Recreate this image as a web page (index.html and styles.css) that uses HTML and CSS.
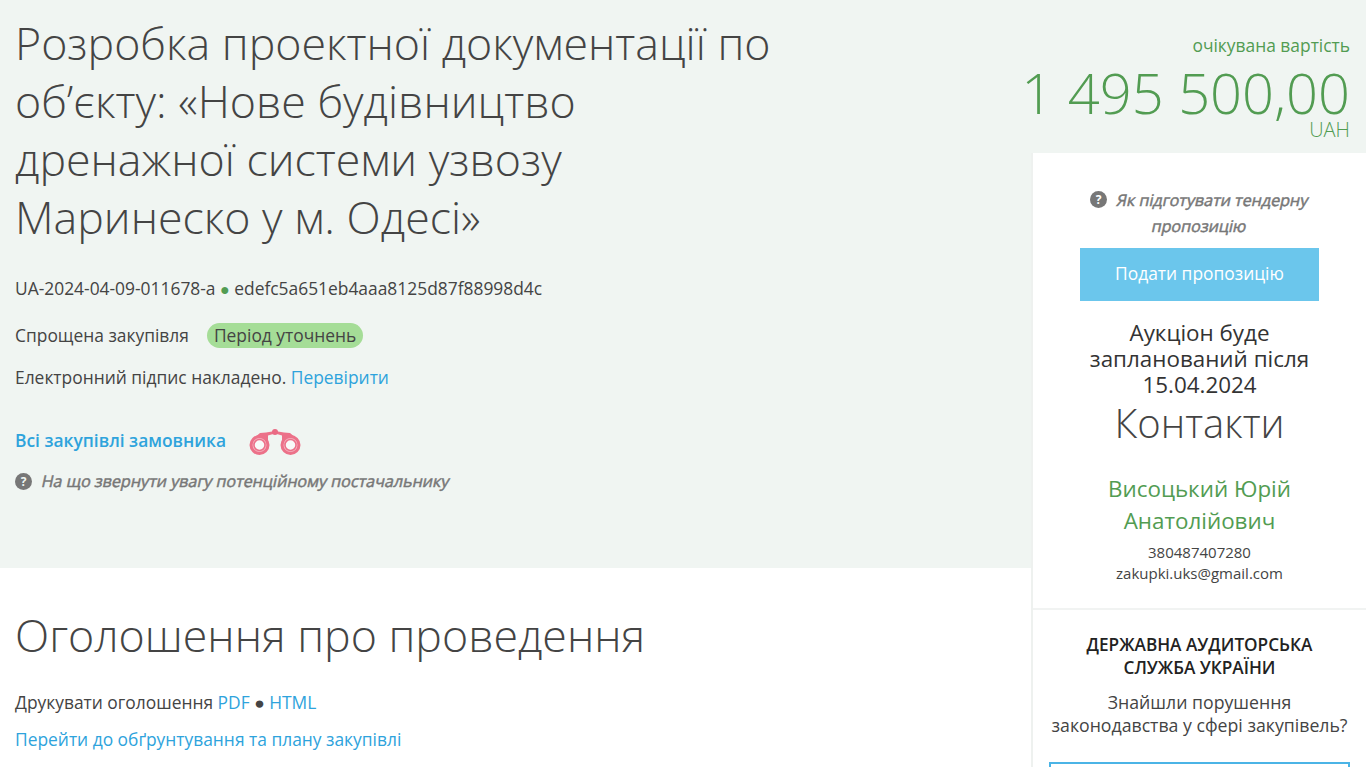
FILE: index.html
```html
<!DOCTYPE html>
<html lang="uk">
<head>
<meta charset="utf-8">
<title>Закупівля</title>
<link rel="stylesheet" href="styles.css">
</head>
<body>
<div class="page">
  <main class="main">
    <section class="hero">
      <h1 class="title">Розробка проектної документації по об’єкту: «Нове будівництво дренажної системи узвозу Маринеско у м. Одесі»</h1>
      <p class="ids">UA-2024-04-09-011678-a <span class="dot">●</span> edefc5a651eb4aaa8125d87f88998d4c</p>
      <p class="status-row"><span>Спрощена закупівля</span><span class="badge">Період уточнень</span></p>
      <p class="sign">Електронний підпис накладено. <a href="#">Перевірити</a></p>
      <p class="buyer">
        <a href="#" class="buyer-link">Всі закупівлі замовника</a>
        <svg class="binoculars" width="52" height="28" viewBox="0 0 52 28" aria-hidden="true">
          <path d="M26 3 L17 4.500 L11 5 L5 10 L2 15 L19 13 L19 7.500 L26 5.500 L33 7.500 L33 13 L50 15 L47 10 L41 5 L35 4.500 Z" fill="#ec7189"/>
          <circle cx="26" cy="4" r="3" fill="#ea6a84"/>
          <circle cx="10.500" cy="17" r="8.500" fill="#f4b4c1" stroke="#ec7189" stroke-width="3"/>
          <circle cx="41.500" cy="17" r="8.500" fill="#f4b4c1" stroke="#ec7189" stroke-width="3"/>
          <circle cx="10.500" cy="17" r="5.500" fill="#f8f9f8" stroke="#ec7189" stroke-width="1.500"/>
          <circle cx="41.500" cy="17" r="5.500" fill="#f8f9f8" stroke="#ec7189" stroke-width="1.500"/>
        </svg>
      </p>
      <p class="hint"><span class="q">?</span><span class="slant">На що звернути увагу потенційному постачальнику</span></p>
    </section>
    <section class="notice">
      <h2 class="notice-title">Оголошення про проведення</h2>
      <p class="print">Друкувати оголошення <a href="#">PDF</a> ● <a href="#">HTML</a></p>
      <p class="plan"><a href="#">Перейти до обґрунтування та плану закупівлі</a></p>
    </section>
  </main>
  <aside class="side">
    <div class="price">
      <div class="price-label">очікувана вартість</div>
      <div class="price-value">1 495 500,00</div>
      <div class="price-cur">UAH</div>
    </div>
    <div class="card">
      <div class="card-top">
        <p class="prep"><span class="prep-line"><span class="q q-side">?</span><span class="slant">Як підготувати тендерну</span></span><span class="prep-line"><span class="slant">пропозицію</span></span></p>
        <a href="#" class="submit">Подати пропозицію</a>
        <p class="auction">Аукціон буде запланований після 15.04.2024</p>
        <h3 class="contacts">Контакти</h3>
        <p class="person">Висоцький Юрій Анатолійович</p>
        <p class="contact-line">380487407280<br>zakupki.uks@gmail.com</p>
      </div>
      <div class="audit">
        <h4 class="audit-title">ДЕРЖАВНА АУДИТОРСЬКА СЛУЖБА УКРАЇНИ</h4>
        <p class="audit-text">Знайшли порушення законодавства у сфері закупівель?</p>
        <div class="audit-btn"></div>
      </div>
    </div>
  </aside>
</div>
</body>
</html>
```

FILE: styles.css
```css
* { box-sizing: border-box; }
html, body { margin: 0; height: 100%; overflow: hidden; }
body { font-family: "Open Sans", sans-serif; color: #444; background: #fff; font-size: 17.4px; }
p { margin: 0; }
a { color: #2ea3dc; text-decoration: none; }
.page { display: flex; width: 1366px; height: 767px; overflow: hidden; }
.main { width: 1031px; flex: none; }
.hero { background: #f0f5f2; height: 568px; padding: 14px 15px 0; }
.title { margin: 0; width: 770px; font-weight: 300; font-size: 44.7px; line-height: 58px; color: #444; }
.ids { margin-top: 29px; line-height: 26px; }
.dot { color: #529c52; font-size: 16px; vertical-align: 0; line-height: 1; }
.status-row { margin-top: 21px; display: flex; align-items: center; height: 26px; }
.badge { margin-left: 18px; background: #a5dd97; border-radius: 13px; padding: 0 7px; height: 25px; line-height: 25px; }
.sign { margin-top: 16px; line-height: 26px; }
.buyer { margin-top: 33px; height: 34px; display: flex; align-items: center; }
.buyer-link { font-weight: 600; }
.binoculars { margin-left: 23px; margin-top: 4px; }
.hint { margin-top: 11px; display: flex; align-items: center; color: #777; font-size: 16.1px; line-height: 26px; }
.slant { display: inline-block; transform: skewX(-12deg); -webkit-text-stroke: 0.5px currentColor; }
.q { display: inline-block; flex: none; width: 17px; height: 17px; border-radius: 50%; background: #777; color: #f0f5f2; font-size: 12px; font-weight: 700; line-height: 17px; text-align: center; margin-right: 10px; }
.notice { padding: 35px 15px 0; }
.notice-title { margin: 0; font-weight: 300; font-size: 44.7px; line-height: 64px; color: #444; }
.print { margin-top: 22px; line-height: 26px; }
.plan { margin-top: 11px; line-height: 26px; }
.side { width: 335px; flex: none; }
.price { background: #f0f5f2; height: 153px; margin-left: -10px; padding: 32px 16px 0 0; text-align: right; color: #529c52; }
.price-label { line-height: 26px; }
.price-value { font-weight: 300; font-size: 56px; line-height: 64px; margin-top: 2px; white-space: nowrap; }
.price-cur { font-weight: 300; font-size: 20px; line-height: 24px; margin-top: -6px; }
.card { background: #fff; border-left: 2px solid #eef1ef; text-align: center; }
.card-top { padding: 34px 32px 24px; border-bottom: 2px solid #f1f3f2; height: 457px; }
.prep { color: #777; font-size: 16.1px; line-height: 26px; }
.prep-line { display: block; white-space: nowrap; }
.q-side { color: #fff; vertical-align: 2px; margin-right: 10px; }
.submit { display: block; margin: 9px 15px 0; width: 239px; height: 53px; line-height: 51px; background: #6bc6ec; color: #fff; }
.auction { margin: 19px auto 0; font-size: 22.4px; line-height: 26px; color: #333; width: 240px; }
.contacts { margin: 0; font-weight: 300; font-size: 40px; line-height: 50px; color: #444; }
.person { margin: 25px auto 0; width: 230px; color: #529c52; font-size: 22.4px; line-height: 31.500px; }
.contact-line { margin-top: 6px; font-size: 15px; line-height: 21px; }
.audit { padding: 24px 16px 0; }
.audit-title { margin: 0 auto; width: 260px; font-size: 17.2px; font-weight: 600; line-height: 22.500px; color: #222; }
.audit-text { margin-top: 12px; font-size: 17.7px; line-height: 23px; }
.audit-btn { margin-top: 25px; height: 50px; border: 2px solid #4bb4e6; }
```
